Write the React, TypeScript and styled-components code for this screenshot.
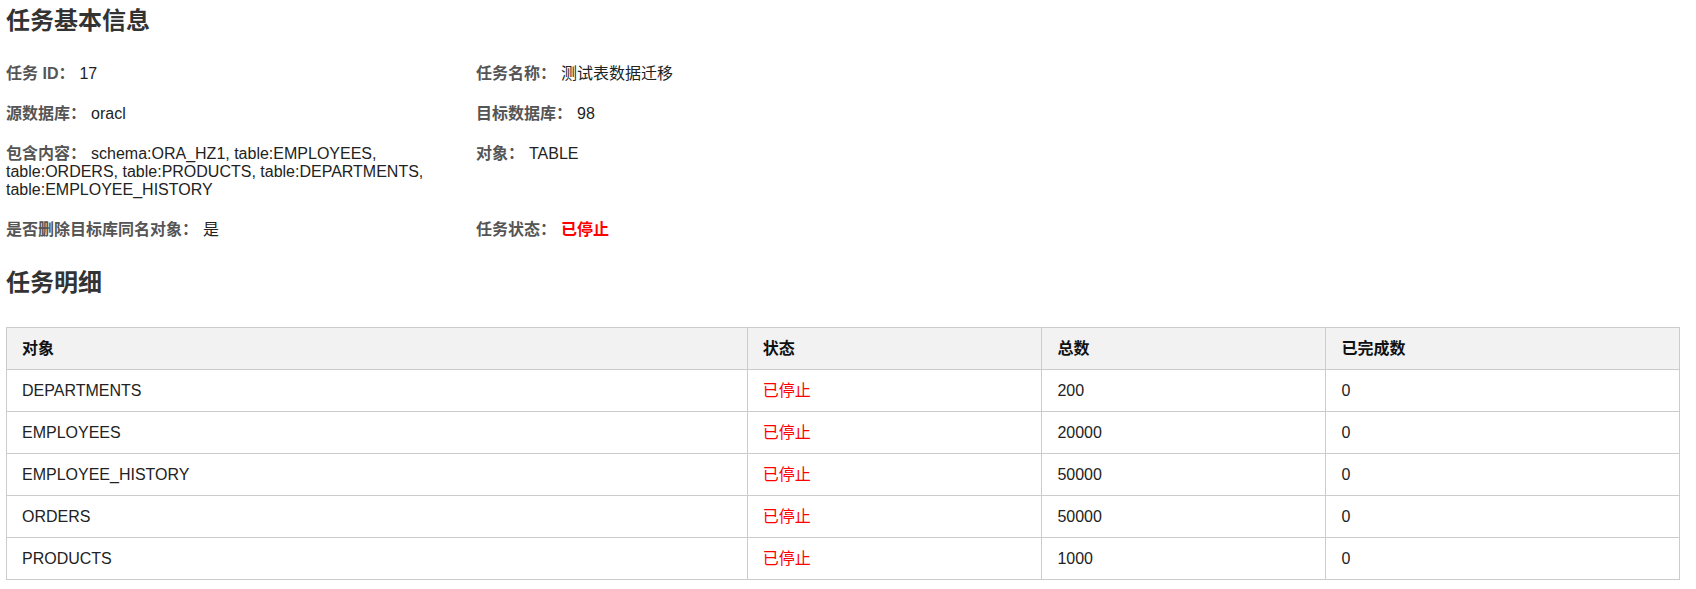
import styled, { createGlobalStyle } from 'styled-components';

const GlobalStyle = createGlobalStyle`
  body {
    margin: 0;
    background: #fff;
    font-family: 'Liberation Sans', Arial, 'Noto Sans CJK SC', sans-serif;
  }
`;

type Detail = {
  object: string;
  total: number;
  done: number;
};

const details: Detail[] = [
  { object: 'DEPARTMENTS', total: 200, done: 0 },
  { object: 'EMPLOYEES', total: 20000, done: 0 },
  { object: 'EMPLOYEE_HISTORY', total: 50000, done: 0 },
  { object: 'ORDERS', total: 50000, done: 0 },
  { object: 'PRODUCTS', total: 1000, done: 0 },
];

const App = () => {
  return (
    <Page>
      <GlobalStyle />
      <Title>任务基本信息</Title>
      <InfoGrid>
        <InfoItem>
          <Label>任务 ID：</Label>
          <Value>17</Value>
        </InfoItem>
        <InfoItem>
          <Label>任务名称：</Label>
          <Value>测试表数据迁移</Value>
        </InfoItem>
        <InfoItem>
          <Label>源数据库：</Label>
          <Value>oracl</Value>
        </InfoItem>
        <InfoItem>
          <Label>目标数据库：</Label>
          <Value>98</Value>
        </InfoItem>
        <InfoItem>
          <Label>包含内容：</Label>
          <Value>
            schema:ORA_HZ1, table:EMPLOYEES, table:ORDERS, table:PRODUCTS,
            table:DEPARTMENTS, table:EMPLOYEE_HISTORY
          </Value>
        </InfoItem>
        <InfoItem>
          <Label>对象：</Label>
          <Value>TABLE</Value>
        </InfoItem>
        <InfoItem>
          <Label>是否删除目标库同名对象：</Label>
          <Value>是</Value>
        </InfoItem>
        <InfoItem>
          <Label>任务状态：</Label>
          <Status $bold>已停止</Status>
        </InfoItem>
      </InfoGrid>

      <Title>任务明细</Title>
      <Table>
        <colgroup>
          <col style={{ width: '44.27%' }} />
          <col style={{ width: '17.62%' }} />
          <col style={{ width: '16.98%' }} />
          <col style={{ width: '21.13%' }} />
        </colgroup>
        <thead>
          <tr>
            <Th>对象</Th>
            <Th>状态</Th>
            <Th>总数</Th>
            <Th>已完成数</Th>
          </tr>
        </thead>
        <tbody>
          {details.map((row) => (
            <tr key={row.object}>
              <Td>{row.object}</Td>
              <Td>
                <Status>已停止</Status>
              </Td>
              <Td>{row.total}</Td>
              <Td>{row.done}</Td>
            </tr>
          ))}
        </tbody>
      </Table>
    </Page>
  );
};

const Page = styled.main`
  padding: 5px 16px 0 6px;
`;

const Title = styled.h2`
  margin: 0 0 28px;
  font-size: 24px;
  line-height: 32px;
  font-weight: bold;
  color: #333;
`;

const InfoGrid = styled.div`
  display: grid;
  grid-template-columns: 470px 470px;
  row-gap: 22px;
  margin-bottom: 28px;
  font-size: 16px;
  line-height: 18px;
`;

const InfoItem = styled.div`
  padding-right: 20px;
`;

const Label = styled.span`
  margin-right: 5px;
  font-weight: bold;
  color: #555;
`;

const Value = styled.span`
  color: #222;
`;

const Status = styled.span<{ $bold?: boolean }>`
  color: #f00;
  font-weight: ${({ $bold }) => ($bold ? 'bold' : 'normal')};
`;

const Table = styled.table`
  width: 100%;
  border-collapse: collapse;
  table-layout: fixed;
  font-size: 16px;
  line-height: 17px;
`;

const Th = styled.th`
  padding: 12px 15px;
  border: 1px solid #ccc;
  background: #f2f2f2;
  text-align: left;
  font-weight: bold;
  color: #111;
`;

const Td = styled.td`
  padding: 12px 15px;
  border: 1px solid #ccc;
  text-align: left;
  color: #222;
`;

export default App;
